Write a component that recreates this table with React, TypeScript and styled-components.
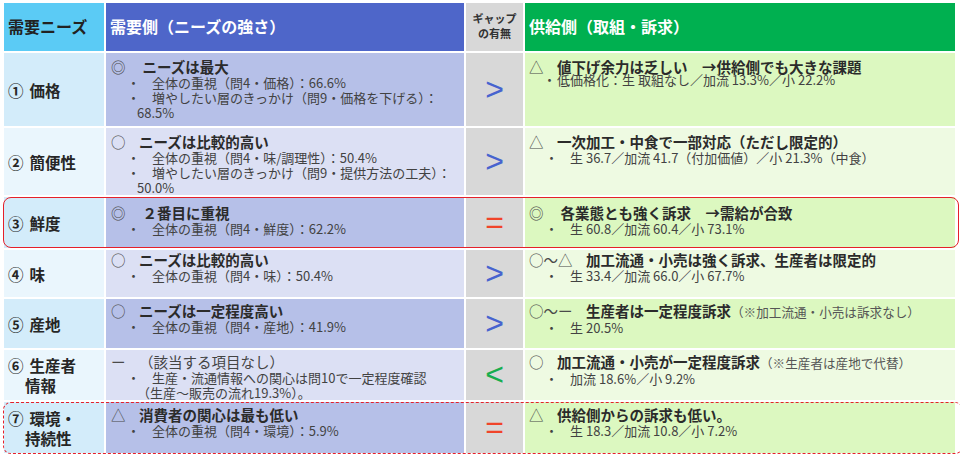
import React from 'react';
import styled, { createGlobalStyle, css } from 'styled-components';

const GlobalStyle = createGlobalStyle`
  html, body {
    margin: 0;
    padding: 0;
    background: #ffffff;
  }
  body {
    font-family: 'Noto Sans CJK JP', 'Noto Sans', sans-serif;
    color: #333333;
  }
  * {
    box-sizing: border-box;
  }
`;

const COLUMNS = '100px 358px 57px 430px';

type Highlight = 'solid' | 'dashed' | undefined;

const Page = styled.div`
  width: 960px;
  height: 460px;
  padding: 3px 0 0 4px;
  overflow: hidden;
`;

const Table = styled.div`
  display: flex;
  flex-direction: column;
  gap: 2px;
`;

const Row = styled.div<{ $h: number; $highlight?: Highlight }>`
  position: relative;
  display: grid;
  grid-template-columns: ${COLUMNS};
  column-gap: 2px;
  height: ${p => p.$h}px;

  ${p =>
    p.$highlight &&
    css`
      &::after {
        content: '';
        position: absolute;
        top: 0;
        bottom: ${p.$highlight === 'dashed' ? -1 : 0}px;
        left: -1px;
        right: ${p.$highlight === 'dashed' ? -3 : 1}px;
        border: 1.5px ${p.$highlight} #e5202a;
        border-radius: 8px;
        pointer-events: none;
      }
    `}
`;

const HeadCell = styled.div<{ $bg: string; $color: string }>`
  display: flex;
  align-items: center;
  padding: 0 0 3px 4px;
  background: ${p => p.$bg};
  color: ${p => p.$color};
  font-size: 16px;
  font-weight: 700;
  white-space: nowrap;
`;

const GapHead = styled.div`
  display: flex;
  align-items: center;
  justify-content: center;
  padding-bottom: 3px;
  background: #d8d8d8;
  color: #333333;
  font-size: 11px;
  font-weight: 700;
  line-height: 15px;
  text-align: center;
`;

const LabelCell = styled.div<{ $odd: boolean }>`
  display: flex;
  align-items: center;
  padding: 0 0 0 21px;
  background: ${p => (p.$odd ? '#d3ecfa' : '#eaf6fd')};
`;

const Label = styled.div`
  text-indent: -17px;
  font-size: 15.5px;
  font-weight: 700;
  line-height: 20px;
  color: #262626;
  white-space: nowrap;
`;

const Num = styled.span`
  margin-right: 6px;
`;

const TextCell = styled.div<{ $bg: string; $pad: number; $left: number }>`
  padding: ${p => p.$pad}px 4px 0 ${p => p.$left}px;
  background: ${p => p.$bg};
  overflow: hidden;
`;

const GapCell = styled.div<{ $color: string }>`
  display: flex;
  align-items: center;
  justify-content: center;
  padding-bottom: 2px;
  background: #d8d8d8;
  color: ${p => p.$color};
  font-family: 'Liberation Sans', Arial, sans-serif;
  font-size: 32px;
  line-height: 1;
`;

const Heading = styled.div<{ $plain?: boolean }>`
  font-size: 14.5px;
  font-weight: ${p => (p.$plain ? 400 : 700)};
  line-height: 17px;
  color: ${p => (p.$plain ? '#444444' : '#2b2b2b')};
  white-space: nowrap;
`;

const Mark = styled.span<{ $wide?: boolean }>`
  display: inline-block;
  margin-right: ${p => (p.$wide ? 17 : 13.5)}px;
  font-weight: 400;
  color: #4a4a4a;
`;

const Note = styled.span`
  font-size: 12.6px;
  font-weight: 400;
  color: #555555;
`;

const Body = styled.div<{ $lift?: boolean }>`
  margin-top: ${p => (p.$lift ? -3 : 0)}px;
`;

const Bullet = styled.div`
  padding-left: 26px;
  font-size: 13px;
  line-height: 15px;
  color: #424242;
  white-space: nowrap;
`;

const Dot = styled.span<{ $tight?: boolean }>`
  display: inline-block;
  width: ${p => (p.$tight ? 14 : 25)}px;
  margin-left: ${p => (p.$tight ? -12 : -10)}px;
`;

type Side = {
  mark: string;
  wide?: boolean;
  title: string;
  plain?: boolean;
  note?: string;
  lines: string[][];
  tight?: boolean;
};

type RowData = {
  num: string;
  label: string[];
  h: number;
  pad: number;
  highlight?: Highlight;
  demand: Side;
  gap: { sym: string; color: string };
  supply: Side;
};

const BLUE = '#4763cf';
const RED = '#f0442a';
const GREEN = '#17ad4f';

const rows: RowData[] = [
  {
    num: '①',
    label: ['価格'],
    h: 73,
    pad: 4.5,
    demand: {
      mark: '◎',
      wide: true,
      title: 'ニーズは最大',
      lines: [['全体の重視（問4・価格）：66.6%'], ['増やしたい層のきっかけ（問9・価格を下げる）：', '68.5%']],
    },
    gap: { sym: '>', color: BLUE },
    supply: {
      mark: '△',
      title: '値下げ余力は乏しい　→供給側でも大きな課題',
      lines: [['低価格化：生 取組なし／加流 13.3%／小 22.2%']],
      tight: true,
    },
  },
  {
    num: '②',
    label: ['簡便性'],
    h: 67,
    pad: 4.5,
    demand: {
      mark: '○',
      title: 'ニーズは比較的高い',
      lines: [['全体の重視（問4・味/調理性）：50.4%'], ['増やしたい層のきっかけ（問9・提供方法の工夫）：', '50.0%']],
    },
    gap: { sym: '>', color: BLUE },
    supply: {
      mark: '△',
      title: '一次加工・中食で一部対応（ただし限定的）',
      lines: [['生 36.7／加流 41.7（付加価値）／小 21.3%（中食）']],
    },
  },
  {
    num: '③',
    label: ['鮮度'],
    h: 51,
    pad: 6.5,
    highlight: 'solid',
    demand: {
      mark: '◎',
      wide: true,
      title: '２番目に重視',
      lines: [['全体の重視（問4・鮮度）：62.2%']],
    },
    gap: { sym: '=', color: RED },
    supply: {
      mark: '◎',
      wide: true,
      title: '各業態とも強く訴求　→需給が合致',
      lines: [['生 60.8／加流 60.4／小 73.1%']],
    },
  },
  {
    num: '④',
    label: ['味'],
    h: 47,
    pad: 0.5,
    demand: {
      mark: '○',
      title: 'ニーズは比較的高い',
      lines: [['全体の重視（問4・味）：50.4%']],
    },
    gap: { sym: '>', color: BLUE },
    supply: {
      mark: '○〜△',
      title: '加工流通・小売は強く訴求、生産者は限定的',
      lines: [['生 33.4／加流 66.0／小 67.7%']],
    },
  },
  {
    num: '⑤',
    label: ['産地'],
    h: 49,
    pad: 2.5,
    demand: {
      mark: '○',
      title: 'ニーズは一定程度高い',
      lines: [['全体の重視（問4・産地）：41.9%']],
    },
    gap: { sym: '>', color: BLUE },
    supply: {
      mark: '○〜ー',
      title: '生産者は一定程度訴求',
      note: '（※加工流通・小売は訴求なし）',
      lines: [['生 20.5%']],
    },
  },
  {
    num: '⑥',
    label: ['生産者', '情報'],
    h: 50,
    pad: 2.5,
    demand: {
      mark: 'ー',
      title: '（該当する項目なし）',
      plain: true,
      lines: [['生産・流通情報への関心は問10で一定程度確認', '（生産〜販売の流れ19.3%）。']],
    },
    gap: { sym: '<', color: GREEN },
    supply: {
      mark: '○',
      title: '加工流通・小売が一定程度訴求',
      note: '（※生産者は産地で代替）',
      lines: [['加流 18.6%／小 9.2%']],
    },
  },
  {
    num: '⑦',
    label: ['環境・', '持続性'],
    h: 51,
    pad: 3.5,
    highlight: 'dashed',
    demand: {
      mark: '△',
      title: '消費者の関心は最も低い',
      lines: [['全体の重視（問4・環境）：5.9%']],
    },
    gap: { sym: '=', color: RED },
    supply: {
      mark: '△',
      title: '供給側からの訴求も低い。',
      lines: [['生 18.3／加流 10.8／小 7.2%']],
    },
  },
];

const SideText = ({ side }: { side: Side }) => (
  <>
    <Heading $plain={side.plain}>
      <Mark $wide={side.wide}>{side.mark}</Mark>
      {side.title}
      {side.note && <Note>{side.note}</Note>}
    </Heading>
    <Body $lift={side.tight}>
      {side.lines.map((line, i) => (
        <Bullet key={i}>
          <Dot $tight={side.tight}>・</Dot>
          {line.map((part, j) => (
            <React.Fragment key={j}>
              {j > 0 && <br />}
              {part}
            </React.Fragment>
          ))}
        </Bullet>
      ))}
    </Body>
  </>
);

const App = () => {
  return (
    <Page>
      <GlobalStyle />
      <Table>
        <Row $h={48}>
          <HeadCell $bg='#5bcbf5' $color='#222222'>
            需要ニーズ
          </HeadCell>
          <HeadCell $bg='#4e66c9' $color='#ffffff'>
            需要側（ニーズの強さ）
          </HeadCell>
          <GapHead>
            ギャップ
            <br />
            の有無
          </GapHead>
          <HeadCell $bg='#00b050' $color='#ffffff'>
            供給側（取組・訴求）
          </HeadCell>
        </Row>

        {rows.map((r, i) => {
          const odd = i % 2 === 0;
          return (
            <Row key={r.num} $h={r.h} $highlight={r.highlight}>
              <LabelCell $odd={odd}>
                <Label>
                  <Num>{r.num}</Num>
                  {r.label.map((part, j) => (
                    <React.Fragment key={j}>
                      {j > 0 && <br />}
                      {part}
                    </React.Fragment>
                  ))}
                </Label>
              </LabelCell>
              <TextCell $bg={odd ? '#b6c0e8' : '#dce0f4'} $pad={r.pad} $left={5}>
                <SideText side={r.demand} />
              </TextCell>
              <GapCell $color={r.gap.color}>{r.gap.sym}</GapCell>
              <TextCell $bg={odd ? '#dcf8c0' : '#eefae2'} $pad={r.pad} $left={4}>
                <SideText side={r.supply} />
              </TextCell>
            </Row>
          );
        })}
      </Table>
    </Page>
  );
};

export default App;
